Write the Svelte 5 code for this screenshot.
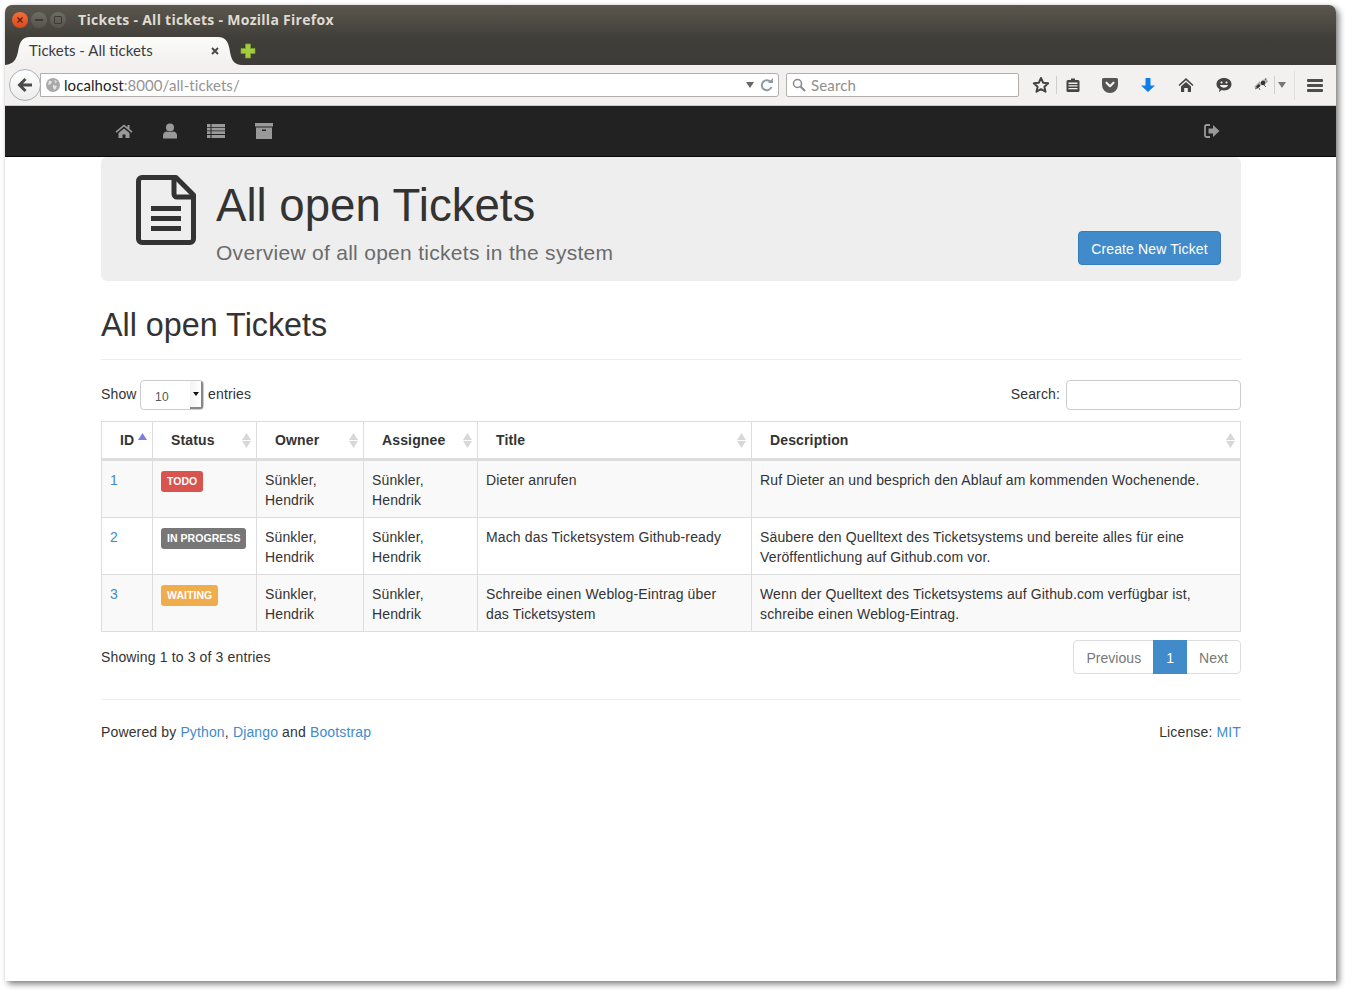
<script>
  const columns = [
    { label: 'ID', cls: 'c1', active: true },
    { label: 'Status', cls: 'c2' },
    { label: 'Owner', cls: 'c3' },
    { label: 'Assignee', cls: 'c4' },
    { label: 'Title', cls: 'c5' },
    { label: 'Description', cls: 'c6' }
  ];
  const rows = [
    { id: 1, status: 'TODO', kind: 'todo', title: 'Dieter anrufen', desc: 'Ruf Dieter an und besprich den Ablauf am kommenden Wochenende.' },
    { id: 2, status: 'IN PROGRESS', kind: 'progress', title: 'Mach das Ticketsystem Github-ready', desc: 'Säubere den Quelltext des Ticketsystems und bereite alles für eine Veröffentlichung auf Github.com vor.' },
    { id: 3, status: 'WAITING', kind: 'waiting', title: 'Schreibe einen Weblog-Eintrag über das Ticketsystem', desc: 'Wenn der Quelltext des Ticketsystems auf Github.com verfügbar ist, schreibe einen Weblog-Eintrag.' }
  ];
</script>

<div class="page">
<div class="window">
  <div class="chrome">
    <div class="titlebar">
      <div class="wm">
        <span class="dot close"><svg viewBox="0 0 8 8" width="8" height="8"><path d="M1.5 1.5l5 5M6.5 1.5l-5 5" stroke="#5a1e08" stroke-width="1.4"/></svg></span>
        <span class="dot"><span class="dash"></span></span>
        <span class="dot"><span class="square"></span></span>
      </div>
      <span class="wintitle">Tickets - All tickets - Mozilla Firefox</span>
    </div>
    <div class="tabrow">
      <div class="tab">
        <svg class="tabshape" viewBox="0 0 236 28" width="236" height="28"><defs><linearGradient id="tabg" x1="0" y1="0" x2="0" y2="1"><stop offset="0" stop-color="#fbfbfa"/><stop offset="1" stop-color="#f2f1f0"/></linearGradient></defs><path d="M0 28C9 27 12 22 13.500 12C15 4 18 0 25 0H213C220 0 223 4 224.500 12C226 22 228 27 236 28Z" fill="url(#tabg)"/></svg>
        <span class="tabtext">Tickets - All tickets</span>
        <svg class="tabx" viewBox="0 0 8 8" width="8" height="8"><path d="M1 1l6 6M7 1l-6 6" stroke="#4a4a4a" stroke-width="2"/></svg>
      </div>
      <svg class="plus" viewBox="0 0 16 16" width="16" height="16"><path d="M5.500 1h5v4.500H15v5h-4.500V15h-5v-4.500H1v-5h4.500z" fill="#a3cc3f" stroke="#7b9c2e" stroke-width=".8" stroke-linejoin="round"/></svg>
    </div>
  </div>

  <div class="toolbar">
    <div class="back"><svg viewBox="0 0 18 18" width="18" height="18"><path d="M9.500 3L3.500 9l6 6M4 9h12" fill="none" stroke="#4a4a4a" stroke-width="3"/></svg></div>
    <div class="urlbar">
      <svg class="globe" viewBox="0 0 14 14" width="14" height="14"><circle cx="7" cy="7" r="7" fill="#a9a9a9"/><path d="M3 2.500l3 1-1 2.500-3 1zM8 1.500l3 2-1.500 2zM7 7l4 1-2 4-2-2z" fill="#e4e4e4"/></svg>
      <span class="url"><span class="host">localhost</span>:8000/all-tickets/</span>
      <svg class="urlarrow" viewBox="0 0 8 6" width="8" height="6"><path d="M0 0h8L4 6z" fill="#666"/></svg>
      <svg class="reload" viewBox="0 0 14 14" width="14" height="14"><path d="M11 4.500A5 5 0 1 0 11.500 9" fill="none" stroke="#8a9aa6" stroke-width="2"/><path d="M8 5h5V0z" fill="#8a9aa6"/></svg>
    </div>
    <div class="searchbar">
      <svg viewBox="0 0 14 14" width="14" height="14"><circle cx="5.500" cy="5.500" r="4" fill="none" stroke="#888" stroke-width="1.500"/><path d="M8.500 8.500l4.500 4.500" stroke="#888" stroke-width="2"/></svg>
      <span>Search</span>
    </div>
    <div class="tools">
      <svg class="t-star" viewBox="0 0 18 18" width="18" height="18"><path d="M9 2l2.100 4.700 5.100.6-3.800 3.400 1.100 5L9 13.200l-4.500 2.500 1.100-5L1.800 7.300l5.100-.6z" fill="none" stroke="#444" stroke-width="2" stroke-linejoin="round"/></svg>
      <span class="sep first"></span>
      <svg class="t-clip" viewBox="0 0 16 16" width="16" height="16"><path d="M6 1.500h4v1.500h3a1.500 1.500 0 0 1 1.500 1.500v9a1.500 1.500 0 0 1-1.500 1.500H3a1.500 1.500 0 0 1-1.500-1.500v-9A1.500 1.500 0 0 1 3 3h3z" fill="#444"/><path d="M3.500 5.500h9v1.400h-9zM3.500 8.200h9v1.400h-9zM3.500 10.900h9v1.400h-9z" fill="#f2f1f0"/></svg>
      <svg class="t-pocket" viewBox="0 0 16 16" width="16" height="16"><path d="M1.500 1h13A1.500 1.500 0 0 1 16 2.500V8A8 8 0 0 1 0 8V2.500A1.500 1.500 0 0 1 1.500 1z" fill="#555"/><path d="M4.500 5.700L8 9.200l3.500-3.500" fill="none" stroke="#f2f1f0" stroke-width="2.200" stroke-linecap="round" stroke-linejoin="round"/></svg>
      <svg class="t-down" viewBox="0 0 16 16" width="16" height="16"><path d="M5.500 1h5v7.500H15L8 15 1 8.500h4.500z" fill="#0f7de8"/></svg>
      <svg class="t-home" viewBox="0 0 16 16" width="16" height="16"><path d="M8 1L0.500 8l1 1L8 3.200 14.500 9l1-1zM3 9.500L8 5l5 4.500V15H9.800v-4H6.200v4H3z" fill="#444"/></svg>
      <svg class="t-chat" viewBox="0 0 16 16" width="16" height="16"><path d="M8 1c4.200 0 7.500 2.500 7.500 6.200s-3.300 6.200-7.500 6.200c-.8 0-1.500-.1-2.200-.3L3 15l.5-3C1.600 11 .5 9.300.500 7.200.5 3.500 3.800 1 8 1z" fill="#444"/><circle cx="5.500" cy="5.500" r="1.100" fill="#f2f1f0"/><circle cx="10.500" cy="5.500" r="1.100" fill="#f2f1f0"/><path d="M4 8h8c-.5 1.800-2.200 2.800-4 2.800S4.500 9.800 4 8z" fill="#f2f1f0"/></svg>
      <svg class="t-bug" viewBox="0 0 16 16" width="16" height="16"><path d="M1 10l6-6 1 4-4 4zM9 3l5-1 1 3-5 3z" fill="#aaa"/><circle cx="10" cy="6" r="2.300" fill="#333"/><path d="M3 9.500l3-2.500 1.500 2-3 2.500z" fill="#333"/><path d="M2 12l2-1M6 11l1 2M11 8l2 2M12 3l1-2" stroke="#666" stroke-width="1"/></svg>
      <span class="sep small"></span>
      <svg class="t-drop" viewBox="0 0 8 6" width="8" height="6"><path d="M0 0h8L4 6z" fill="#777"/></svg>
      <span class="sep tall"></span>
      <div class="burger"><span></span><span></span><span></span></div>
    </div>
  </div>

  <nav class="navbar">
    <div class="navinner">
      <div class="navleft">
        <svg viewBox="0 0 18 16" width="18" height="16"><path d="M9 1.500L.500 8.500l1 1.200L9 3.500l7.500 6.200 1-1.200-3-2.500V2h-2v2.200zM3.500 10L9 5.500l5.500 4.500v5H10.500v-3.500h-3V15H3.500z" fill="#999"/></svg>
        <svg viewBox="0 0 16 16" width="16" height="16"><circle cx="8" cy="4.500" r="4" fill="#999"/><path d="M1 15.500v-3C1 10 3 8.500 5 8.500c1 .7 5 .7 6 0 2 0 4 1.500 4 4v3z" fill="#999"/></svg>
        <svg viewBox="0 0 18 14" width="18" height="14"><path d="M0 0h3.500v3H0zM4.500 0H18v3H4.500zM0 3.700h3.500v2.800H0zM4.500 3.700H18v2.800H4.500zM0 7.300h3.500v2.800H0zM4.500 7.300H18v2.800H4.500zM0 10.900h3.500V14H0zM4.500 10.900H18V14H4.500z" fill="#999"/></svg>
        <svg class="archive" viewBox="0 0 18 16" width="18" height="16"><path d="M0 0h18v3.500H0zM1 4.500h16V16H1z" fill="#999"/><path d="M7 6.500h4V8H7z" fill="#222"/></svg>
      </div>
      <svg viewBox="0 0 16 14" width="16" height="14"><path d="M6 1H2.500A1.500 1.500 0 0 0 1 2.500v9A1.500 1.500 0 0 0 2.500 13H6" fill="none" stroke="#999" stroke-width="1.800"/><path d="M4.500 4.500H9V1l6.500 6L9 13V9.500H4.500z" fill="#999"/></svg>
    </div>
  </nav>

  <main class="container">
    <section class="jumbotron">
      <svg class="docicon" viewBox="0 0 60 70" width="60" height="70">
        <path d="M2.500 6A3.500 3.500 0 0 1 6 2.500H40L57.500 20V64A3.500 3.500 0 0 1 54 67.500H6A3.500 3.500 0 0 1 2.500 64Z" fill="none" stroke="#333" stroke-width="5" stroke-linejoin="round"/>
        <path d="M38 3V19a3 3 0 0 0 3 3H57" fill="none" stroke="#333" stroke-width="5"/>
        <path d="M15 31h30v5H15zM15 41h30v5H15zM15 51h30v5H15z" fill="#333"/>
      </svg>
      <div class="jhead">
        <h1>All open Tickets</h1>
        <p class="lead">Overview of all open tickets in the system</p>
      </div>
      <button class="btn">Create New Ticket</button>
    </section>

    <div class="pageheader"><h2>All open Tickets</h2></div>

    <div class="dtcontrols">
      <div class="lenlabel">
        <span>Show</span>
        <div class="fakeselect"><span class="val">10</span><span class="arrowbox"><svg viewBox="0 0 6 4" width="6" height="4"><path d="M0 0h6L3 4z" fill="#111"/></svg></span></div>
        <span>entries</span>
      </div>
      <div class="searchlabel"><span>Search:</span><input type="text" aria-label="Search" /></div>
    </div>

    <table>
      <thead>
        <tr>
          {#each columns as col}
            <th class={col.cls}>
              {col.label}
              <svg class="sort" viewBox="0 0 9 15" width="9" height="15">
                <path d="M4.500 0L9 7H0z" fill={col.active ? '#7a7fe0' : '#d8d8d8'}/>
                {#if !col.active}<path d="M4.500 15L0 8h9z" fill="#d8d8d8"/>{/if}
              </svg>
            </th>
          {/each}
        </tr>
      </thead>
      <tbody>
        {#each rows as row}
          <tr>
            <td><a href="#top">{row.id}</a></td>
            <td class="lab"><span class="label {row.kind}">{row.status}</span></td>
            <td>Sünkler, Hendrik</td>
            <td>Sünkler, Hendrik</td>
            <td>{row.title}</td>
            <td>{row.desc}</td>
          </tr>
        {/each}
      </tbody>
    </table>

    <div class="dtfooter">
      <div class="info">Showing 1 to 3 of 3 entries</div>
      <div class="pagination">
        <a class="page first" href="#top">Previous</a>
        <a class="page current" href="#top">1</a>
        <a class="page last" href="#top">Next</a>
      </div>
    </div>

    <footer>
      <div>Powered by <a href="#top">Python</a>, <a href="#top">Django</a> and <a href="#top">Bootstrap</a></div>
      <div>License: <a href="#top">MIT</a></div>
    </footer>
  </main>
</div>
</div>

<style>
  :global(body) { margin: 0; background: #fff; }
  .page { padding: 5px 9px 9px 5px; height: 990px; box-sizing: border-box; overflow: hidden; }
  .window {
    width: 1331px; height: 976px; background: #fff;
    border-radius: 7px 7px 0 0; overflow: hidden;
    box-shadow: 3px 3px 6px rgba(0,0,0,.5), 0 0 2px rgba(0,0,0,.08);
    font: 14px/20px "Liberation Sans", Arial, sans-serif; color: #333;
    letter-spacing: .14px;
    display: flex; flex-direction: column;
  }
  .chrome { height: 60px; background: linear-gradient(#5b574e 0, #403e39 34px, #3c3b37 60px); display: flex; flex-direction: column; flex: none; }
  .titlebar { height: 28px; display: flex; align-items: center; padding-top: 1px; }
  .wm { display: flex; gap: 3px; padding-left: 7px; width: 66px; }
  .dot { width: 16px; height: 16px; border-radius: 50%; background: linear-gradient(#6f6c64, #55534c); display: flex; align-items: center; justify-content: center; }
  .dot.close { background: linear-gradient(#f1703b, #d9481b); }
  .dash { width: 8px; height: 2px; background: #3c3b37; }
  .square { width: 6px; height: 6px; border: 1px solid #3c3b37; border-radius: 1px; }
  .wintitle { font: 700 14px/20px "Open Sans", sans-serif; color: #dfdbd2; letter-spacing: .28px; }
  .tabrow { height: 31px; display: flex; align-items: flex-end; }
  .tab { position: relative; width: 236px; height: 28px; flex: none; }
  .tabshape { position: absolute; left: 0; top: 0; }
  .tabtext { position: absolute; left: 24px; top: 3px; font: 15px/20px Lato, sans-serif; color: #3c3c3c; letter-spacing: 0; }
  .tabx { position: absolute; left: 206px; top: 10px; }
  .plus { margin-left: -1px; margin-bottom: 6px; }
  .toolbar { height: 40px; background: #f2f1f0; border-bottom: 1px solid #c9c9c6; display: flex; align-items: center; position: relative; flex: none; }
  .back { position: absolute; left: 4px; top: 4px; width: 32px; height: 32px; box-sizing: border-box; border-radius: 50%; border: 1px solid #a9b0bb; background: linear-gradient(#fff, #ececec); display: flex; align-items: center; justify-content: center; z-index: 1; }
  .urlbar { margin-left: 35px; width: 739px; height: 24px; box-sizing: border-box; background: #fff; border: 1px solid #b0afab; border-radius: 0 3px 3px 0; display: flex; align-items: center; padding-left: 5px; flex: none; }
  .globe { flex: none; }
  .url { margin-left: 4px; font: 15px/20px Lato, sans-serif; color: #949494; flex: 1; letter-spacing: .08px; }
  .host { color: #222; }
  .urlarrow { margin-right: 6px; }
  .reload { margin-right: 4px; }
  .searchbar { margin-left: 7px; width: 233px; height: 24px; box-sizing: border-box; background: #fff; border: 1px solid #b0afab; border-radius: 2px; display: flex; align-items: center; padding-left: 5px; gap: 5px; font: 15px/20px Lato, sans-serif; color: #8e8e8e; flex: none; }
  .tools { flex: 1; display: flex; align-items: center; height: 100%; padding-left: 13px; }
  .sep { width: 1px; height: 18px; background: #cfcecb; flex: none; }
  .sep.first { margin: 0 8px 0 6px; }
  .sep.small { margin: 0 3px 0 5px; }
  .sep.tall { height: 30px; margin: 0 12px 0 8px; background: #e2e1de; }
  .t-pocket { margin-left: 21px; }
  .t-down, .t-home, .t-chat { margin-left: 22px; }
  .t-bug { margin-left: 21px; }
  .burger { display: flex; flex-direction: column; gap: 2px; width: 16px; }
  .burger span { display: block; height: 3px; background: #4d4d4d; border-radius: 1px; }
  .navbar { height: 51px; background: #222; border-bottom: 1px solid #080808; box-sizing: border-box; flex: none; }
  .navinner { width: 1170px; margin-left: 81px; height: 50px; display: flex; align-items: center; justify-content: space-between; padding: 0 36px 0 29px; box-sizing: border-box; }
  .navleft { display: flex; align-items: center; gap: 29px; }
  .archive { margin-left: 1px; }
  .container { width: 1140px; margin-left: 96px; }
  .jumbotron { background: #eee; height: 124px; display: flex; padding-left: 35px; box-sizing: border-box; border-radius: 6px; }
  .docicon { margin-top: 18px; flex: none; }
  .jhead { margin-left: 20px; flex: 1; }
  h1 { font-size: 45.6px; line-height: 50px; font-weight: 400; margin: 24px 0 0; color: #333; letter-spacing: 0; }
  .lead { font-size: 21px; line-height: 30px; margin: 7px 0 0; color: #6b6b6b; font-weight: 400; letter-spacing: .29px; }
  .btn { align-self: flex-end; margin: 0 20px 16px 0; width: 143px; height: 34px; background: #428bca; border: 1px solid #357ebd; border-radius: 4px; color: #fff; font: 14px/20px "Liberation Sans", Arial, sans-serif; letter-spacing: .12px; padding: 1px 0 0; }
  .pageheader { margin-top: 24px; border-bottom: 1px solid #eee; padding-bottom: 14px; }
  h2 { font-size: 32.3px; line-height: 40px; font-weight: 400; margin: 0; color: #333; letter-spacing: 0; }
  .dtcontrols { display: flex; justify-content: space-between; margin-top: 20px; height: 30px; }
  .lenlabel, .searchlabel { display: flex; align-items: center; height: 30px; }
  .lenlabel span, .searchlabel span { position: relative; top: -1px; }
  .fakeselect { width: 64px; height: 30px; box-sizing: border-box; border: 1px solid #ccc; border-radius: 4px; margin: 0 4px 0 3.5px; display: flex; background: #fff; overflow: hidden; }
  .fakeselect .val { font-size: 12px; padding-left: 14px; flex: 1; line-height: 30px; color: #555; top: 1px; }
  .arrowbox { width: 13px; background: linear-gradient(90deg, #f4f4f4, #fff); border-right: 2px solid #888; border-bottom: 2px solid #888; display: flex; align-items: center; justify-content: center; top: 0 !important; box-sizing: border-box; }
  .searchlabel input { width: 175px; height: 30px; box-sizing: border-box; border: 1px solid #ccc; border-radius: 4px; margin-left: 6px; background: #fff; padding: 0; }
  table { margin-top: 11px; width: 1140px; border-collapse: collapse; table-layout: fixed; border: 1px solid #ddd; }
  th { text-align: left; font-weight: 700; padding: 8px 18px; border: 1px solid #ddd; border-bottom: 3px solid #ddd; position: relative; line-height: 20px; height: 20px; box-sizing: content-box; }
  .sort { position: absolute; right: 5px; top: 11px; }
  .c1 { width: 14px; } .c2 { width: 67px; } .c3 { width: 70px; } .c4 { width: 77px; } .c5 { width: 237px; }
  td { padding: 9px 8px 7px; border: 1px solid #ddd; vertical-align: top; line-height: 20px; }
  td.lab { padding-top: 8px; }
  tbody tr:nth-child(odd) td { background: #f9f9f9; }
  a { color: #428bca; text-decoration: none; }
  .label { display: inline-block; font-size: 10.5px; font-weight: 700; line-height: 11px; color: #fff; padding: 5px 6px; border-radius: 3px; vertical-align: top; margin: 2px 0 0; letter-spacing: .05px; }
  .todo { background: #d9534f; } .progress { background: #777; } .waiting { background: #f0ad4e; }
  .dtfooter { display: flex; justify-content: space-between; margin-top: 8px; }
  .info { padding-top: 7px; }
  .pagination { display: flex; height: 34px; }
  .page-unused { display: none; }
  .pagination a { box-sizing: border-box; height: 34px; border: 1px solid #ddd; padding: 6px 12px; color: #777; margin-left: -1px; background: #fff; line-height: 22px; letter-spacing: .04px; }
  .pagination a.first { border-radius: 4px 0 0 4px; }
  .pagination a.last { border-radius: 0 4px 4px 0; }
  .pagination a.current { background: #428bca; border-color: #428bca; color: #fff; z-index: 1; }
  footer { margin-top: 25px; border-top: 1px solid #eee; padding-top: 22px; display: flex; justify-content: space-between; }
</style>
